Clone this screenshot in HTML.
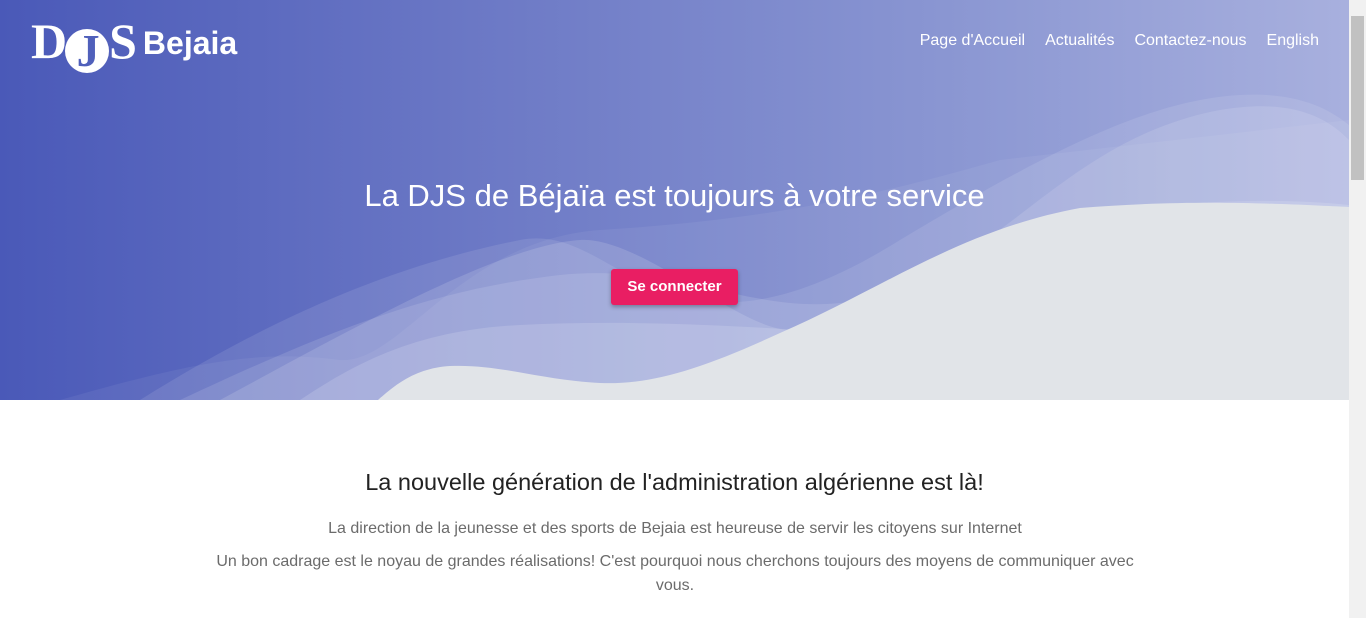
<!DOCTYPE html>
<html><head><meta charset="utf-8"><style>
*{margin:0;padding:0;box-sizing:border-box}
body{width:1366px;height:618px;overflow:hidden;font-family:"Liberation Sans",Roboto,sans-serif;background:#fff;position:relative}
.hero{position:absolute;left:0;top:0;width:1349px;height:400px;background:linear-gradient(90deg,#4a59b8 0%,#6b78c5 35%,#8a96d2 70%,#a8b0de 100%);overflow:hidden}
.hero svg{position:absolute;left:0;top:0}
.nav{position:absolute;top:32px;right:30px;color:#fff;font-size:16px}
.nav span{margin-left:20px}
.logo{position:absolute;left:31px;top:14px;color:#fff}
h1{position:absolute;top:178px;left:0;width:1349px;text-align:center;color:#fff;font-weight:400;font-size:31px}
.btn{position:absolute;left:611px;top:269px;width:127px;height:36px;background:#e91e63;color:#fff;font-weight:bold;font-size:15px;text-align:center;line-height:35px;border-radius:3px;box-shadow:0 2px 4px rgba(0,0,0,.3)}
h2{position:absolute;top:469px;left:0;width:1349px;text-align:center;font-weight:400;font-size:23.5px;color:#222}
p{position:absolute;left:210px;width:930px;text-align:center;color:#6b6b6b;font-size:16px;line-height:24px}
.sb{position:absolute;right:0;top:0;width:17px;height:618px;background:#f1f1f1}
.sb div{position:absolute;left:2px;top:16px;width:13px;height:164px;background:#c1c1c1}
</style></head><body>
<div class="hero">
<svg width="1349" height="400" viewBox="0 0 1349 400">
<path d="M180 400 C330 330 430 290 560 275 C680 262 760 320 860 300 C1000 270 1060 140 1220 110 C1280 100 1320 110 1349 140 L1349 400Z" fill="#fff" opacity=".12"/>
<path d="M140 400 C300 300 420 260 520 240 C620 220 660 390 900 240 C1050 150 1150 100 1240 95 C1300 92 1330 110 1349 125 L1349 400Z" fill="#fff" opacity=".1"/>
<path d="M220 400 C350 330 500 245 580 240 C640 236 740 330 790 330 C900 330 960 240 1060 220 C1200 195 1300 200 1349 205 L1349 400Z" fill="#fff" opacity=".14"/>
<path d="M60 400 C200 360 260 350 340 360 C400 365 460 240 600 230 C760 220 860 200 1000 160 L1349 120 L1349 400Z" fill="#fff" opacity=".06"/>
<path d="M300 400 C360 360 420 330 520 325 C620 320 720 325 800 330 L800 400Z" fill="#fff" opacity=".15"/>
<path d="M378 400 C400 380 420 368 450 366 C500 364 540 380 600 383 C650 385 700 370 780 333 C880 290 960 230 1080 208 C1200 198 1300 205 1349 207 V400Z" fill="#e1e4e8"/>
</svg>
<div class="logo"><span style="font-family:'Liberation Serif',serif;font-weight:bold;font-size:50px;letter-spacing:-2px;position:relative;top:-2px">D<span style="display:inline-block;width:44px;height:44px;border-radius:50%;background:#fff;color:#5060bb;text-align:center;line-height:44px;vertical-align:-8px;font-size:46px">J</span>S</span><span style="font-weight:bold;font-size:32px;margin-left:8px;position:relative;top:-6px">Bejaia</span></div>
<div class="nav"><span>Page d'Accueil</span><span>Actualités</span><span>Contactez-nous</span><span>English</span></div>
<h1>La DJS de Béjaïa est toujours à votre service</h1>
<div class="btn">Se connecter</div>
</div>
<h2>La nouvelle génération de l'administration algérienne est là!</h2>
<p style="top:517px">La direction de la jeunesse et des sports de Bejaia est heureuse de servir les citoyens sur Internet</p>
<p style="top:550px">Un bon cadrage est le noyau de grandes réalisations! C'est pourquoi nous cherchons toujours des moyens de communiquer avec vous.</p>
<div class="sb"><div></div></div>
</body></html>
